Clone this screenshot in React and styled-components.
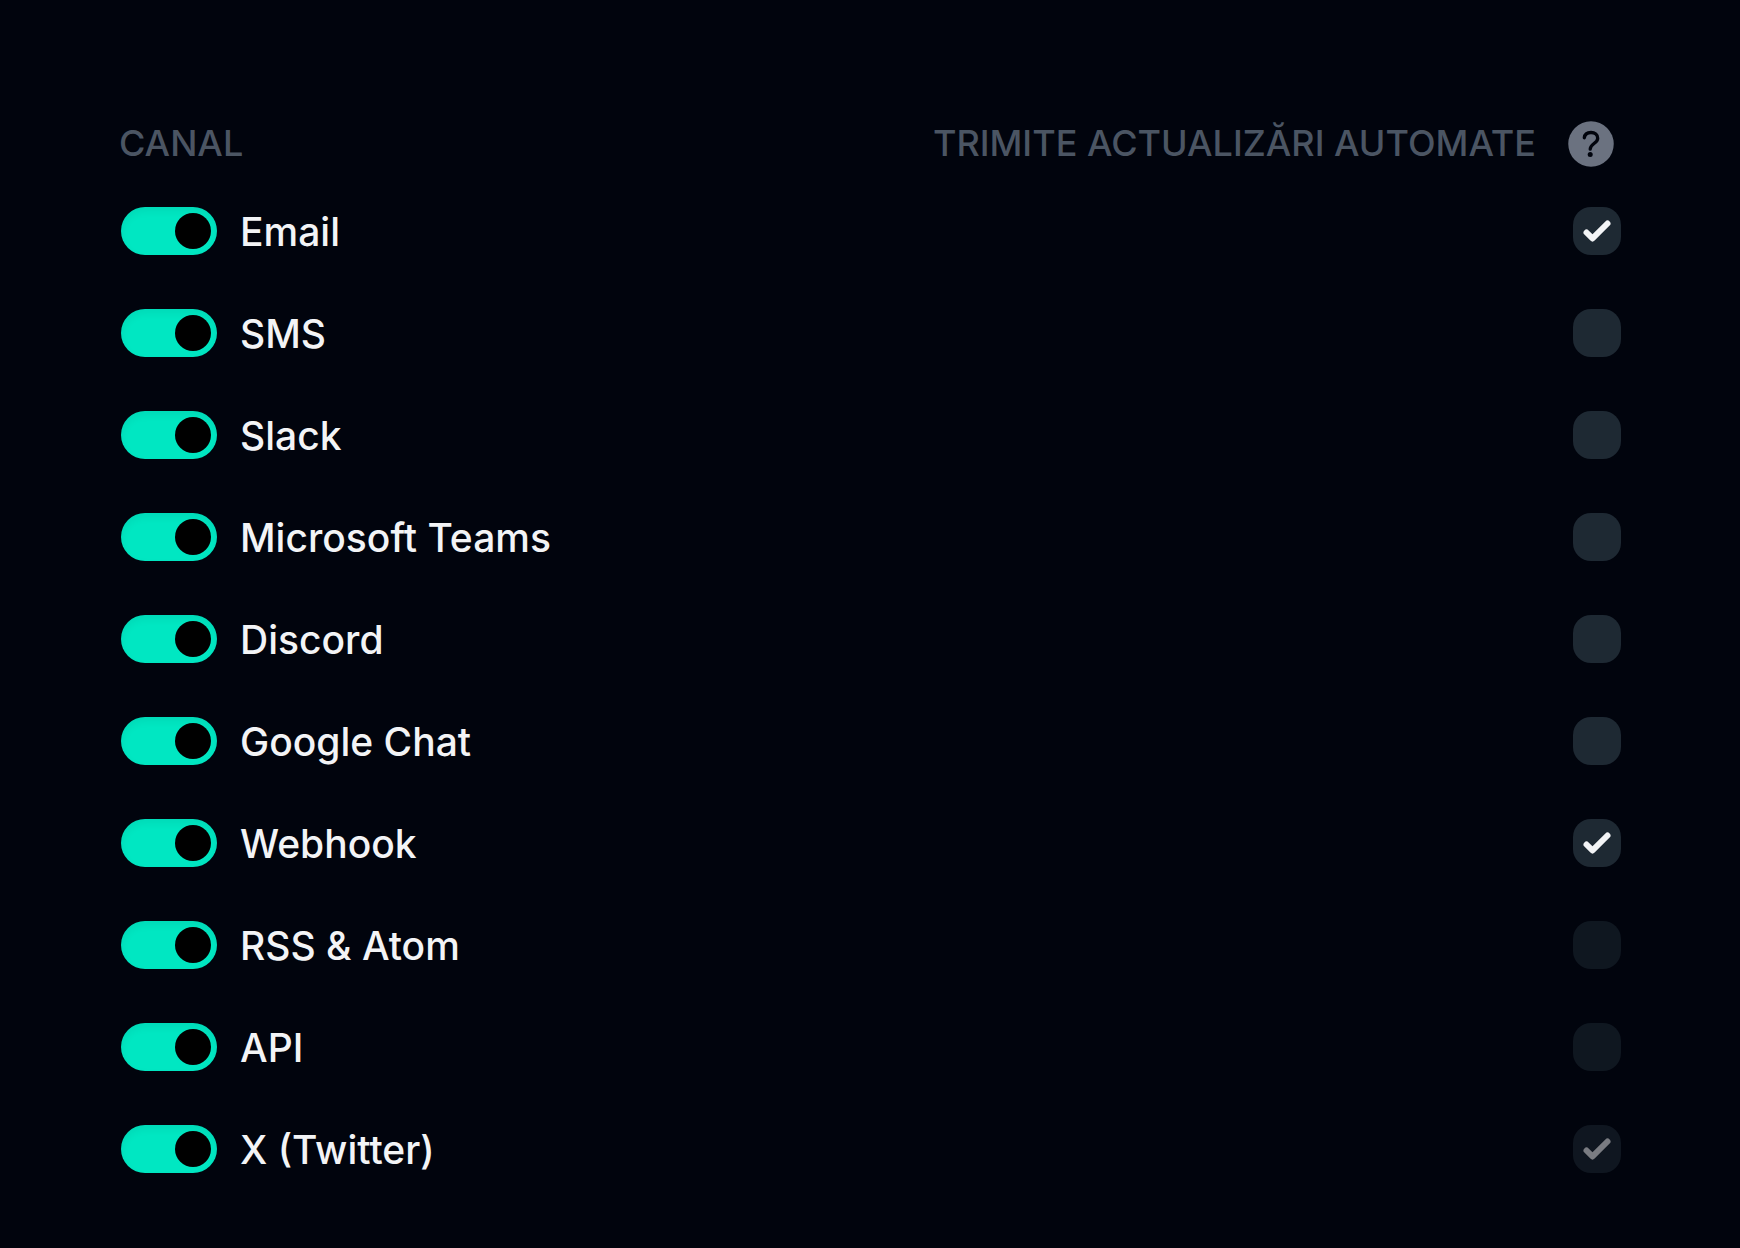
import React from 'react';
import styled, { createGlobalStyle } from 'styled-components';

const GlobalStyle = createGlobalStyle`
  *, *::before, *::after {
    box-sizing: border-box;
  }

  body {
    margin: 0;
    background-color: #01040d;
    font-family: 'Inter', sans-serif;
  }
`;

const Page = styled.main`
  min-height: 100vh;
  padding: 116px 119px 72px;
  background-color: #01040d;
`;

const Header = styled.div`
  display: flex;
  align-items: flex-start;
  justify-content: space-between;
  height: 56px;
  padding-right: 2px;
  color: #4b5563;
  font-size: 36px;
  font-weight: 500;
  line-height: 54px;
  text-transform: uppercase;
`;

const HeaderTitle = styled.span`
  white-space: nowrap;
`;

const HeaderAction = styled.div`
  display: flex;
  align-items: flex-start;
  gap: 27px;
`;

const HelpButton = styled.button`
  display: block;
  width: 56px;
  height: 56px;
  padding: 0;
  border: 0;
  background: none;
  color: #6b7280;
  cursor: pointer;

  svg {
    display: block;
    width: 100%;
    height: 100%;
  }
`;

const ChannelList = styled.ul`
  display: grid;
  gap: 54px;
  margin: 35px 0 0;
  padding: 0 0 0 2px;
  list-style: none;
`;

const ChannelRow = styled.li`
  display: flex;
  align-items: center;
  justify-content: space-between;
  height: 48px;
`;

const ChannelLabel = styled.label`
  display: flex;
  align-items: flex-start;
  gap: 23px;
  height: 48px;
  color: #f3f4f6;
  font-size: 39px;
  font-weight: 500;
  line-height: 50px;
  cursor: pointer;
`;

const Toggle = styled.input`
  appearance: none;
  flex: none;
  display: flex;
  align-items: center;
  width: 96px;
  height: 48px;
  margin: 0;
  padding: 6px;
  border-radius: 24px;
  background-color: #374151;
  box-shadow: inset 0 4px 8px rgba(0, 0, 0, 0.06);
  cursor: pointer;

  &::before {
    content: '';
    width: 36px;
    height: 36px;
    border-radius: 50%;
    background-color: #000000;
  }

  &:checked {
    justify-content: flex-end;
    background-color: #00e7c2;
  }
`;

const CheckboxWrap = styled.span`
  display: grid;
  flex: none;
  width: 48px;
  height: 48px;
  opacity: ${(props) => (props.$disabled ? 0.5 : 1)};

  > * {
    grid-area: 1 / 1;
  }

  svg {
    width: 48px;
    height: 48px;
    color: #f3f4f6;
    pointer-events: none;
    visibility: hidden;
  }

  input:checked + svg {
    visibility: visible;
  }
`;

const Checkbox = styled.input`
  appearance: none;
  width: 48px;
  height: 48px;
  margin: 0;
  border-radius: 18px;
  background-color: #1e2933;
  cursor: pointer;
`;

const CheckIcon = () => (
  <svg viewBox="0 0 16 16" fill="currentColor" aria-hidden="true">
    <path d="M12.207 4.793a1 1 0 010 1.414l-5 5a1 1 0 01-1.414 0l-2-2a1 1 0 011.414-1.414L6.5 9.086l4.293-4.293a1 1 0 011.414 0z" />
  </svg>
);

const HelpIcon = () => (
  <svg viewBox="0 0 56 56" aria-hidden="true">
    <circle cx="28" cy="28" r="22.75" fill="currentColor" />
    <path
      d="M21.3 21.8c.4-3.400 3.100-5.300 6.700-5.300 3.900 0 6.700 2.200 6.700 5.700 0 5.300-7.500 5.400-7.500 11"
      fill="none"
      stroke="#01040d"
      strokeWidth="3.3"
      strokeLinecap="round"
    />
    <circle cx="27.200" cy="38.500" r="2.500" fill="#01040d" />
  </svg>
);

const channels = [
  { id: 'email', name: 'Email', auto: true },
  { id: 'sms', name: 'SMS' },
  { id: 'slack', name: 'Slack' },
  { id: 'teams', name: 'Microsoft Teams' },
  { id: 'discord', name: 'Discord' },
  { id: 'google-chat', name: 'Google Chat' },
  { id: 'webhook', name: 'Webhook', auto: true },
  { id: 'rss', name: 'RSS & Atom', locked: true },
  { id: 'api', name: 'API', locked: true },
  { id: 'twitter', name: 'X (Twitter)', auto: true, locked: true },
];

const App = () => {
  return (
    <>
      <GlobalStyle />
      <Page>
        <Header>
          <HeaderTitle>Canal</HeaderTitle>
          <HeaderAction>
            <HeaderTitle id="auto-updates">Trimite actualizări automate</HeaderTitle>
            <HelpButton type="button" aria-labelledby="auto-updates">
              <HelpIcon />
            </HelpButton>
          </HeaderAction>
        </Header>
        <ChannelList>
          {channels.map(({ id, name, auto, locked }) => (
            <ChannelRow key={id}>
              <ChannelLabel htmlFor={id}>
                <Toggle id={id} type="checkbox" role="switch" defaultChecked />
                <span id={`${id}-name`}>{name}</span>
              </ChannelLabel>
              <CheckboxWrap $disabled={locked}>
                <Checkbox
                  type="checkbox"
                  defaultChecked={auto}
                  disabled={locked}
                  aria-labelledby={`${id}-name auto-updates`}
                />
                <CheckIcon />
              </CheckboxWrap>
            </ChannelRow>
          ))}
        </ChannelList>
      </Page>
    </>
  );
};

export default App;
